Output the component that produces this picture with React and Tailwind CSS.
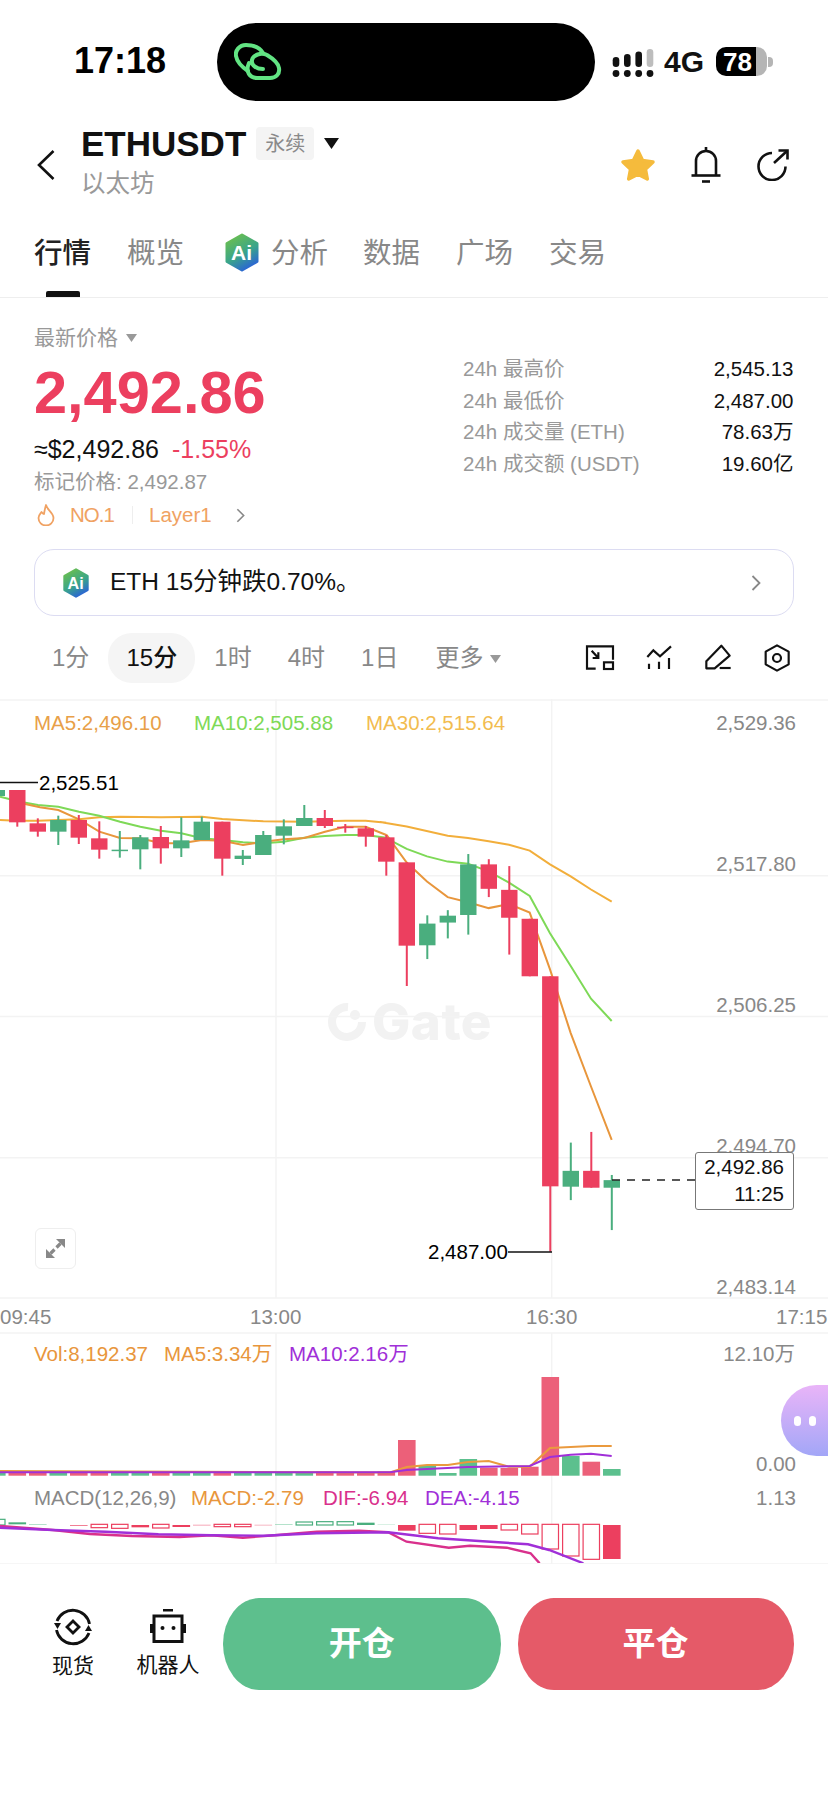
import React from "react";

const z3 = (p) => p.map(([x, y]) => [x / 3, 700 + y / 3]);
const z4 = (p) => p.map(([x, y]) => [380 + x / 3, 780 + y / 2.904]);
const z5 = (p) => p.map(([x, y]) => [x / 1.894, 1300 + y / 3]);
const pts = (p) => p.map(([x, y]) => `${x.toFixed(1)},${y.toFixed(1)}`).join(" ");

const RED = "#ec3f5f";
const GREEN = "#4aae7e";

const ma5 = [...z3([[75,312],[120,322],[175,330],[237,358],[298,395],[360,414],[421,415],[483,430],[544,430],[606,420],[667,422],[729,435],[790,425],[852,418],[913,414],[975,395],[1036,380],[1097,380],[1159,405]]), ...z4([[20,160],[80,240],[141,295],[203,340],[264,355],[326,372],[387,360],[449,385],[510,550],[572,735],[633,890],[695,1045]])];
const ma10 = [...z3([[0,290],[60,305],[114,315],[175,320],[237,335],[298,347],[360,365],[421,380],[483,392],[544,400],[606,415],[667,420],[729,427],[790,430],[852,425],[913,413],[975,408],[1036,405],[1097,405],[1159,413]]), ...z4([[40,180],[80,200],[141,222],[203,237],[264,243],[326,265],[387,298],[449,337],[510,445],[572,540],[633,635],[695,700]])];
const ma30 = [...z3([[0,360],[50,362],[114,362],[237,358],[298,352],[360,350],[483,352],[606,350],[667,357],[790,364],[913,365],[1036,362],[1097,362],[1159,368]]), ...z4([[0,122],[80,135],[203,162],[264,168],[326,178],[387,188],[449,205],[510,245],[572,280],[633,318],[695,353]])];

const c3 = [
  [-1,270,288,270,288,"g"],[0,270,367,270,380,"r"],[1,370,395,355,410,"r"],[2,360,395,347,435,"g"],[3,360,413,345,432,"r"],[4,415,449,364,476,"r"],[5,449,452,393,473,"g"],[6,412,448,405,508,"g"],[7,411,445,378,491,"r"],[8,421,445,352,471,"g"],[9,365,420,350,420,"g"],[10,365,476,365,527,"r"],[11,467,477,450,495,"g"],[12,405,465,393,465,"g"],[13,379,407,358,433,"g"],[14,354,378,315,378,"g"],[15,354,378,330,384,"r"],[16,380,384,372,398,"r"],[17,385,410,378,440,"r"],[18,412,485,405,527,"r"],[19,487,737,487,858,"r"],
].map(([i,a,b,c,d,k]) => [i,700+a/3,700+b/3,700+c/3,700+d/3,k]);
const c4 = [
  [20,417,480,393,520,"g"],[21,394,414,378,460,"g"],[22,245,392,215,449,"g"],[23,245,316,230,340,"r"],[24,319,400,250,507,"r"],[25,403,570,403,570,"r"],[26,570,1180,570,1370,"r"],[27,1135,1181,1053,1220,"g"],[28,1135,1184,1022,1184,"r"],[29,1162,1184,1147,1307,"g"],
].map(([i,a,b,c,d,k]) => [i,780+a/2.904,780+b/2.904,780+c/2.904,780+d/2.904,k]);
const candles = [...c3, ...c4];
const cx = (i) => 17.3 + 20.5 * i;

const volTops = {19:1440,20:1466,21:1473,22:1459,23:1467.7,24:1468,25:1466.7,26:1377,27:1456,28:1461.7,29:1469};
const volMa5 = [[0,1471],[390,1472.5],[406.7,1467],[427,1465],[447.7,1465],[468,1462],[488.7,1461],[509,1466.7],[529.7,1466.7],[550,1448],[570.7,1447],[591,1446],[611.7,1446]];
const volMa10 = [[0,1473],[390,1473],[406.7,1470],[468,1467],[529.7,1466],[550,1457],[570.7,1454.7],[591,1453.7],[611.7,1456]];

const macd = [
  [-1,658,675,"h",GREEN],[0,667,673,"s",GREEN],[1,672,674,"s","#8fd4b2"],[3,675,677,"s",RED],[4,673,683,"h",RED],[5,673,685,"h",RED],[6,675,682,"s",RED],[7,673,684,"h",RED],[8,675,681,"s",RED],[9,674,677,"s","#f7a8b8"],[10,673,680,"h",RED],[11,673,680,"h",RED],[12,674,677,"s","#f7b8c4"],[13,673,675,"s","#8fd4b2"],[14,666,675,"h",GREEN],[15,665,675,"h",GREEN],[16,665,675,"h",GREEN],[17,668,675,"s",GREEN],[18,673,675,"s","#c8ebd9"],[19,675,692,"s",RED],[20,673,700,"h",RED],[21,673,702,"h",RED],[22,675,690,"s",RED],[23,675,687,"s",RED],[24,673,690,"h",RED],[25,673,702,"h",RED],[26,673,747,"h",RED],[27,673,768,"h",RED],[28,673,778,"h",RED],[29,675,777,"s",RED],
];
const dea = z5([[0,683],[100,690],[200,695],[300,703],[400,706],[500,707],[600,700],[735,697],[830,715],[900,722],[1000,733],[1040,750],[1105,790]]);
const dif = z5([[0,678],[100,690],[170,702],[250,708],[340,711],[400,706],[460,713],[520,706],[600,695],[680,692],[735,697],[770,725],[850,743],[890,737],[960,743],[1005,760],[1022,790]]);

function ChartSvg() {
  return (
    <svg className="absolute left-0 top-0 w-[828px] h-[865px]" viewBox="0 699 828 865" fill="none">
      <g stroke="#f3f3f3" strokeWidth="1.5">
        {[700, 875.7, 1016.5, 1157.7, 1298, 1333, 1564].map((y) => <line key={y} x1="0" x2="828" y1={y} y2={y} />)}
        {[276, 551.7].map((x) => (
          <g key={x}><line x1={x} x2={x} y1="699" y2="1298" /><line x1={x} x2={x} y1="1333" y2="1564" /></g>
        ))}
      </g>
      <polyline points={pts(ma30)} stroke="#f2ae3b" strokeWidth="2" />
      <polyline points={pts(ma10)} stroke="#7ed957" strokeWidth="2" />
      <polyline points={pts(ma5)} stroke="#e8963c" strokeWidth="2" />
      {candles.map(([i, a, b, c, d, k]) => {
        const col = k === "g" ? GREEN : RED;
        return (
          <g key={i} fill={col}>
            <rect x={cx(i) - 1} y={c} width="2" height={d - c} />
            <rect x={cx(i) - 8.2} y={a} width="16.4" height={Math.max(b - a, 1.5)} />
          </g>
        );
      })}
      <line x1="0" x2="38" y1="782.5" y2="782.5" stroke="#111" strokeWidth="1.5" />
      <line x1="508" x2="552" y1="1252" y2="1252" stroke="#111" strokeWidth="1.5" />
      <line x1="612" x2="695" y1="1180" y2="1180" stroke="#222" strokeWidth="1.5" strokeDasharray="8 7" />

      {candles.filter(([i]) => i >= -1).map(([i, , , , , k]) => {
        const top = volTops[i] ?? (i % 3 === 0 ? 1471.5 : 1472.5);
        return <rect key={i} x={cx(i) - 8.8} y={top} width="17.6" height={1475.7 - top} fill={k === "g" ? "#5cc08e" : "#ec6079"} />;
      })}
      <polyline points={pts(volMa5)} stroke="#ea9a3e" strokeWidth="2.2" />
      <polyline points={pts(volMa10.map(([x, y]) => [x, y - (x < 391 ? 0.8 : 0)]))} stroke="#a02fd8" strokeWidth="2" />

      {macd.map(([i, a, b, kind, col]) => {
        const y = 1300 + a / 3, h = (b - a) / 3;
        return kind === "s"
          ? <rect key={i} x={cx(i) - 8.8} y={y} width="17.6" height={h} fill={col} />
          : <rect key={i} x={cx(i) - 8.2} y={y} width="16.4" height={h} stroke={col} strokeWidth="1.2" fill="#fff" />;
      })}
      <svg x="0" y="1500" width="828" height="63" viewBox="0 1500 828 63" fill="none">
        <polyline points={pts(dif)} stroke="#d9308c" strokeWidth="2.4" />
        <polyline points={pts(dea)} stroke="#a02fd8" strokeWidth="2.4" />
      </svg>
    </svg>
  );
}

function AiIcon({ className }) {
  return (
    <svg className={className} viewBox="0 0 36 39">
      <defs>
        <linearGradient id="aig" x1="0.2" y1="0" x2="0.7" y2="1">
          <stop offset="0" stopColor="#6bbf4e" />
          <stop offset="0.55" stopColor="#3aa58a" />
          <stop offset="1" stopColor="#2a62d8" />
        </linearGradient>
      </defs>
      <path d="M18 2 L33 10.5 V28.5 L18 37 L3 28.5 V10.5 Z" fill="url(#aig)" stroke="url(#aig)" strokeWidth="3" strokeLinejoin="round" />
      <text x="17.5" y="27" textAnchor="middle" fill="#fff" fontSize="21" fontWeight="700" fontFamily="Liberation Sans">Ai</text>
    </svg>
  );
}

const Chevron = ({ className, color = "#888" }) => (
  <svg className={className} viewBox="0 0 10 16" fill="none"><path d="M1.5 1 L8.5 8 L1.5 15" stroke={color} strokeWidth="1.8" /></svg>
);

export default function App() {
  return (
    <div className="relative w-[828px] h-[1796px] overflow-hidden bg-white text-[#111] font-['Liberation_Sans','Noto_Sans_CJK_SC',sans-serif]">
      {/* status bar */}
      <div className="flex h-[108px] items-start">
        <div className="ml-[74px] mt-[41px] w-[100px] text-[36px] leading-[40px] font-bold text-black">17:18</div>
        <div className="ml-[43px] mt-[23px] flex h-[78px] w-[378px] items-center rounded-[39px] bg-black pl-[17px]">
          <svg className="w-[48px] h-[38px]" viewBox="235 43 48 38" fill="none" stroke="#62e483" strokeWidth="4" strokeLinecap="round" strokeLinejoin="round">
            <path d="M264 53 C260 46 252 45 247 45 C240 45 236 51 237 56 C238 62 243 67 249 71" />
            <path d="M250 63 C246 72 251 78 258 78 L271 78 C277 78 281 74 280 68 C279 62 273 58 268 55 C262 52 254 55 253 60 C252 65 257 69 264 69" />
          </svg>
        </div>
        <div className="ml-[17px] mt-[46px]">
          <svg className="w-[42px] h-[32px]" viewBox="612 46 42 32">
            <g fill="#111">
              <rect x="612.7" y="57" width="6.6" height="10" rx="3.3" /><rect x="624" y="54" width="6.6" height="13" rx="3.3" /><rect x="635.4" y="51.5" width="6.6" height="15.5" rx="3.3" />
              <circle cx="616" cy="73.5" r="3.4" /><circle cx="627.3" cy="73.5" r="3.4" /><circle cx="638.7" cy="73.5" r="3.4" /><circle cx="650" cy="73.5" r="3.4" />
            </g>
            <rect x="646.7" y="49" width="6.6" height="18" rx="3.3" fill="#bdbdbd" />
          </svg>
        </div>
        <div className="ml-[10px] mt-[47px] w-[42px] text-[30px] leading-[30px] font-bold">4G</div>
        <div className="ml-[10px] mt-[47px] flex items-center">
          <div className="flex h-[29px] w-[51px] overflow-hidden rounded-[10px]">
            <div className="flex w-[40px] items-center justify-center bg-black pl-[3px] text-[26px] font-bold leading-none text-white">78</div>
            <div className="flex-1 bg-[#b5b5b5]" />
          </div>
          <div className="ml-[1px] h-[10px] w-[5px] rounded-r-[4px] bg-[#b5b5b5]" />
        </div>
      </div>

      {/* header */}
      <div className="flex h-[117px] items-start">
        <svg className="ml-[37px] mt-[42px] w-[18px] h-[30px]" viewBox="0 0 18 30" fill="none"><path d="M16.5 1 L2 15 L16.5 29" stroke="#111" strokeWidth="2.6" /></svg>
        <div className="ml-[26px] pt-[19px]">
          <div className="flex h-[33px] items-center">
            <span className="text-[35px] font-bold leading-none text-[#111]">ETHUSDT</span>
            <span className="ml-[10px] flex h-[33px] w-[58px] items-center justify-center rounded-[4px] bg-[#f4f4f4] text-[20px] text-[#8a8a8a]">永续</span>
            <svg className="ml-[10px] w-[15px] h-[11px]" viewBox="0 0 15 11"><path d="M0 0 H15 L7.5 11 Z" fill="#111" /></svg>
          </div>
          <div className="mt-[12px] text-[24.5px] leading-[24px] text-[#999]">以太坊</div>
        </div>
        <div className="ml-auto mt-[39px] flex items-center pr-[39px]">
          <svg className="w-[36px] h-[34px]" viewBox="0 0 36 34"><path d="M18 3 L22.6 12.6 L33 14 L25.4 21.2 L27.3 31 L18 26.2 L8.7 31 L10.6 21.2 L3 14 L13.4 12.6 Z" fill="#f5bb3c" stroke="#f5bb3c" strokeWidth="3.5" strokeLinejoin="round" /></svg>
          <svg className="ml-[35px] w-[30px] h-[36px]" viewBox="0 0 30 36" fill="none" stroke="#111" strokeWidth="2.6">
            <path d="M15 0 V4" />
            <path d="M5 28.5 V14 A10 10 0 0 1 25 14 V28.5" />
            <path d="M0.5 28.5 H29.5" />
            <path d="M11 34.5 H19" />
          </svg>
          <svg className="ml-[36px] w-[32px] h-[32px]" viewBox="0 0 32 32" fill="none" stroke="#111" strokeWidth="2.6">
            <path d="M15 4 A13.5 13.5 0 1 0 28.5 17.5" />
            <path d="M17 14 L30 2" />
            <path d="M21.5 1.5 H30.5 V10.5" />
          </svg>
        </div>
      </div>

      {/* tabs */}
      <div className="relative flex h-[73px] items-start border-b-[1.5px] border-[#eeeeee] pt-[14px] pl-[34px] text-[28.5px] leading-[29px] text-[#888]">
        <span className="font-medium text-[#222]">行情</span>
        <span className="ml-[36px]">概览</span>
        <AiIcon className="ml-[40px] -mt-[6px] w-[36px] h-[39px]" />
        <span className="ml-[11px]">分析</span>
        <span className="ml-[35px]">数据</span>
        <span className="ml-[36px]">广场</span>
        <span className="ml-[36px]">交易</span>
        <div className="absolute bottom-0 left-[46px] h-[6px] w-[34px] rounded-t-[2px] bg-[#111]" />
      </div>

      {/* price block */}
      <div className="flex h-[251px] items-start">
        <div className="ml-[34px] w-[400px] pt-[29px]">
          <div className="flex h-[21px] items-center text-[21px] text-[#999]">
            最新价格
            <svg className="ml-[8px] w-[11px] h-[8px]" viewBox="0 0 11 8"><path d="M0 0 H11 L5.5 8 Z" fill="#999" /></svg>
          </div>
          <div className="mt-[15px] h-[60px] text-[59.5px] font-bold leading-[60px] text-[#ec3f5f]">2,492.86</div>
          <div className="mt-[14px] flex h-[24px] items-center text-[25px] leading-none">
            <span>≈$2,492.86</span>
            <span className="ml-[13px] text-[#ec3f5f]">-1.55%</span>
          </div>
          <div className="mt-[10px] h-[22px] text-[20.5px] leading-[22px] text-[#999]">标记价格: 2,492.87</div>
          <div className="mt-[10px] flex h-[24px] items-center text-[20.5px] text-[#f0a263]">
            <svg className="ml-[3px] w-[18px] h-[22px]" viewBox="0 0 18 22" fill="none"><path d="M9 1 C10 6 16.5 8.5 16.5 14 A7.5 7.5 0 0 1 1.5 14 C1.5 11 3.5 9.5 4.5 8 C5.5 9.5 6.5 10 7 10 C7.5 7 8 4 9 1 Z" stroke="#f0a263" strokeWidth="1.8" strokeLinejoin="round" /></svg>
            <span className="ml-[15px] w-[42px] tracking-[-1px]">NO.1</span>
            <span className="ml-[20px] h-[18px] w-px bg-[#eeeeee]" />
            <span className="ml-[16px] w-[62px]">Layer1</span>
            <Chevron className="ml-[25px] w-[9px] h-[15px]" />
          </div>
        </div>
        <div className="ml-[29px] w-[330.5px] pt-[55px] text-[20.5px] leading-[31.5px]">
          {[["24h 最高价", "2,545.13"], ["24h 最低价", "2,487.00"], ["24h 成交量 (ETH)", "78.63万"], ["24h 成交额 (USDT)", "19.60亿"]].map(([a, b]) => (
            <div key={a} className="flex justify-between">
              <span className="text-[#999]">{a}</span>
              <span className="text-[#111]">{b}</span>
            </div>
          ))}
        </div>
      </div>

      {/* AI card */}
      <div className="ml-[34px] flex h-[67px] w-[759.5px] items-center rounded-[20px] border-[1.5px] border-[#dcdcf2] pl-[27px] pr-[32px]">
        <AiIcon className="w-[28px] h-[30px]" />
        <span className="ml-[20px] text-[24.5px] text-[#111]">ETH 15分钟跌0.70%。</span>
        <Chevron className="ml-auto w-[10px] h-[16px]" />
      </div>

      {/* interval row */}
      <div className="mt-[17px] flex h-[50px] items-center pl-[52px] pr-[36px] text-[24px] text-[#888]">
        <span>1分</span>
        <span className="ml-[19px] flex h-[50px] w-[87px] items-center justify-center rounded-[24px] bg-[#f5f5f5] font-medium text-[#111]">15分</span>
        <span className="ml-[19px]">1时</span>
        <span className="ml-[36px]">4时</span>
        <span className="ml-[36px]">1日</span>
        <span className="ml-[37px]">更多</span>
        <svg className="ml-[7px] mt-[2px] w-[11px] h-[8px]" viewBox="0 0 11 8"><path d="M0 0 H11 L5.5 8 Z" fill="#999" /></svg>
        <div className="ml-auto flex gap-[29px]">
          <svg className="w-[30px] h-[30px]" viewBox="46 40 90 90" fill="none" stroke="#111" strokeWidth="6.5">
            <path d="M78 117 H52 V50 H130 V90" /><rect x="103" y="98" width="27" height="20" /><path d="M66 63 L86 85 M86 68 V85 H69" />
          </svg>
          <svg className="w-[30px] h-[30px]" viewBox="222 40 90 90" fill="none" stroke="#111" strokeWidth="6.5">
            <path d="M232 82 L250 62 L270 80 L303 50" /><path d="M237 102 V118 M267 96 V118 M297 85 V118" />
          </svg>
          <svg className="w-[30px] h-[30px]" viewBox="400 40 90 90" fill="none" stroke="#111" strokeWidth="6.5" strokeLinejoin="round">
            <path d="M410 95 L455 48 L480 78 L435 116 H410 Z" /><path d="M450 115 H483" />
          </svg>
          <svg className="w-[30px] h-[30px]" viewBox="577 40 90 90" fill="none" stroke="#111" strokeWidth="6.5" strokeLinejoin="round">
            <path d="M622 47 L657 66 V104 L622 123 L588 104 V66 Z" /><circle cx="622" cy="85" r="12" />
          </svg>
        </div>
      </div>

      {/* charts */}
      <div className="relative mt-[16px] h-[865px]">
        <div className="absolute left-[327px] top-[297px] flex items-center text-[#f2f2f2]">
          <svg className="w-[40px] h-[40px]" viewBox="0 0 40 40" fill="none">
            <path d="M21 5 A15 15 0 1 0 35 20" stroke="#f2f2f2" strokeWidth="8" />
            <circle cx="28" cy="13" r="5" fill="#f2f2f2" />
          </svg>
          <span className="ml-[5px] font-['Inter',sans-serif] text-[51px] font-extrabold leading-none tracking-[0.5px]">Gate</span>
        </div>
        <ChartSvg />

        {/* main candle panel */}
        <div className="relative h-[634px]">
          <div className="relative flex h-[36px] items-center pl-[34px] pt-[12px] text-[20.5px] leading-[24px]">
            <span className="w-[160px] text-[#e8a048]">MA5:2,496.10</span>
            <span className="w-[172px] text-[#7ed957]">MA10:2,505.88</span>
            <span className="text-[#f2bc50]">MA30:2,515.64</span>
          </div>
          <div className="absolute right-[32px] top-[12px] flex flex-col items-end gap-[117px] text-[20.5px] leading-[24px] text-[#888]">
            <span>2,529.36</span>
            <span>2,517.80</span>
            <span>2,506.25</span>
            <span>2,494.70</span>
            <span>2,483.14</span>
          </div>
          <div className="absolute left-[39px] top-[72px] text-[20.5px] leading-[24px] text-black">2,525.51</div>
          <div className="absolute left-[428px] top-[541px] text-[20.5px] leading-[24px] text-black">2,487.00</div>
          <div className="absolute left-[695px] top-[453px] h-[58px] w-[99px] rounded-[3px] border-[1.5px] border-[#777] bg-white pr-[9px] text-right text-[20.5px] leading-[27px] text-[#111]">
            <div>2,492.86</div>
            <div>11:25</div>
          </div>
          <div className="absolute left-[35px] top-[529px] flex h-[41px] w-[41px] items-center justify-center rounded-[6px] border-[1.5px] border-[#eeeeee] bg-white">
            <svg className="w-[21px] h-[21px]" viewBox="0 0 21 21" fill="#888" stroke="#888">
              <path d="M11 1 H20 V10 Z" strokeWidth="0" /><path d="M1 11 V20 H10 Z" strokeWidth="0" />
              <path d="M15.5 5.5 L11.5 9.5 M9.5 11.5 L5.5 15.5" fill="none" strokeWidth="3.2" />
            </svg>
          </div>
          <div className="absolute bottom-[4px] left-0 flex text-[20.5px] leading-[24px] text-[#888]">
            <span className="w-[52px]">09:45</span>
            <span className="ml-[198px] w-[52px]">13:00</span>
            <span className="ml-[224px] w-[52px]">16:30</span>
            <span className="ml-[198px] w-[52px]">17:15</span>
          </div>
        </div>

        {/* volume */}
        <div className="relative h-[149px] pt-[9px]">
          <div className="flex h-[24px] items-center pl-[34px] pr-[33px] text-[20.5px] leading-[24px]">
            <span className="w-[130px] text-[#e8963c]">Vol:8,192.37</span>
            <span className="w-[125px] text-[#e8963c]">MA5:3.34万</span>
            <span className="text-[#a02fd8]">MA10:2.16万</span>
            <span className="ml-auto text-[#888]">12.10万</span>
          </div>
          <div className="absolute right-[32px] top-[119px] text-[20.5px] leading-[24px] text-[#888]">0.00</div>
        </div>

        {/* macd */}
        <div className="relative h-[82px] pt-[4px]">
          <div className="flex h-[24px] items-center pl-[34px] pr-[32px] text-[20.5px] leading-[24px]">
            <span className="w-[157px] text-[#888]">MACD(12,26,9)</span>
            <span className="w-[132px] text-[#e8963c]">MACD:-2.79</span>
            <span className="w-[102px] text-[#d9308c]">DIF:-6.94</span>
            <span className="text-[#a02fd8]">DEA:-4.15</span>
            <span className="ml-auto text-[#888]">1.13</span>
          </div>
        </div>

        {/* floating bubble */}
        <div className="absolute right-0 top-[686px] flex h-[71px] w-[47px] items-center gap-[8px] rounded-l-[36px] bg-gradient-to-b from-[#e9b4f8] to-[#a2a6f7] pl-[13px]">
          <span className="h-[10px] w-[7px] rounded-full bg-white" />
          <span className="h-[10px] w-[7px] rounded-full bg-white" />
        </div>
      </div>

      {/* bottom bar */}
      <div className="flex items-start pt-[34px]">
        <div className="ml-[41px] flex w-[64px] flex-col items-center">
          <svg className="mt-[10px] w-[38px] h-[38px]" viewBox="0 0 38 38" fill="none" stroke="#111" strokeWidth="2.8">
            <path d="M35.5 16 A17 17 0 0 0 3 13" /><path d="M2.5 22 A17 17 0 0 0 35 25" />
            <path d="M0 15 L7 15 L3.5 21 Z" fill="#111" strokeWidth="0" /><path d="M31 23 L38 23 L34.5 17 Z" fill="#111" strokeWidth="0" />
            <path d="M19 13 L25 19 L19 25 L13 19 Z" />
          </svg>
          <span className="mt-[9px] text-[21px] leading-[22px] text-[#111]">现货</span>
        </div>
        <div className="ml-[31px] flex w-[64px] flex-col items-center">
          <svg className="mt-[11px] w-[36px] h-[34px]" viewBox="0 0 36 34" fill="none">
            <rect x="13" y="0" width="10" height="2.5" fill="#111" />
            <rect x="4" y="7" width="28" height="25.5" stroke="#111" strokeWidth="3" />
            <rect x="0" y="15" width="3" height="9" fill="#111" /><rect x="33" y="15" width="3" height="9" fill="#111" />
            <circle cx="12.5" cy="19" r="2" fill="#111" /><circle cx="23.5" cy="19" r="2" fill="#111" />
          </svg>
          <span className="mt-[11px] text-[21px] leading-[22px] text-[#111]">机器人</span>
        </div>
        <div className="ml-[23px] flex h-[92px] w-[277.5px] items-center justify-center rounded-[36px/46px] bg-[#5dbf8d] text-[33px] font-bold text-white">开仓</div>
        <div className="ml-[17px] flex h-[92px] w-[276px] items-center justify-center rounded-[36px/46px] bg-[#e55a68] text-[33px] font-bold text-white">平仓</div>
      </div>
    </div>
  );
}
